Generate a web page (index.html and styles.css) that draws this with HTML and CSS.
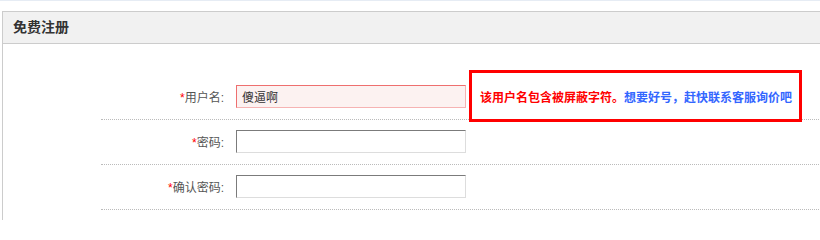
FILE: index.html
```html
<!DOCTYPE html>
<html lang="zh-CN">
<head>
<meta charset="utf-8">
<title>免费注册</title>
<link rel="stylesheet" href="styles.css">
</head>
<body>
<div class="topbar"></div>
<div class="panel">
  <div class="panel-head">免费注册</div>
  <div class="panel-body">
    <div class="form">
      <div class="row">
        <label class="label"><span class="star">*</span>用户名:</label>
        <input class="field field-error" type="text" value="傻逼啊">
      </div>
      <div class="row">
        <label class="label"><span class="star">*</span>密码:</label>
        <input class="field" type="password">
      </div>
      <div class="row">
        <label class="label"><span class="star">*</span>确认密码:</label>
        <input class="field" type="password">
      </div>
    </div>
  </div>
</div>
<div class="tip"><span class="tip-red">该用户名包含被屏蔽字符。</span><span class="tip-blue">想要好号，赶快联系客服询价吧</span></div>
</body>
</html>
```
FILE: styles.css
```css
html, body {
  margin: 0;
  padding: 0;
  background: #fff;
  overflow: hidden;
  height: 220px;
  font-family: "Liberation Sans", "Noto Sans CJK SC", sans-serif;
  font-size: 12px;
  color: #555;
}
.topbar {
  height: 1px;
  background: #e6ecf4;
  margin-bottom: 10px;
}
.panel {
  margin-left: 2px;
  width: 840px;
  height: 208px;
  border-top: 1px solid #cccccc;
  border-left: 1px solid #cccccc;
  overflow: hidden;
}
.panel-head {
  height: 31px;
  line-height: 31px;
  background: #f1f1f1;
  border-bottom: 1px solid #cccccc;
  padding-left: 10px;
  font-size: 14px;
  font-weight: bold;
  color: #333;
}
.panel-body {
  padding-top: 31px;
}
.form {
  margin-left: 98px;
}
.row {
  display: flex;
  align-items: center;
  padding: 10px 0 11px;
  border-bottom: 1px dotted #bbbbbb;
}
.label {
  width: 123px;
  text-align: right;
  margin-right: 12px;
  color: #555;
  font-size: 12px;
}
.star {
  color: #f00;
}
.field {
  box-sizing: border-box;
  width: 230px;
  height: 23px;
  margin: 0;
  padding: 0 5px;
  border: 1px solid;
  border-color: #7b7b7b #dddddd #dddddd #7b7b7b;
  background: #fff;
  font-family: "Liberation Sans", "Noto Sans CJK SC", sans-serif;
  font-size: 12px;
  color: #333;
  outline: none;
}
.field-error {
  border-color: #ee6f6f #f6b3b3 #f6b3b3 #ee6f6f;
  background: #fcf2f1;
}
.tip {
  position: absolute;
  left: 469px;
  top: 70px;
  width: 333px;
  height: 52px;
  box-sizing: border-box;
  border: 3px solid #f00;
  display: flex;
  align-items: center;
  padding-left: 8px;
  font-weight: bold;
  font-size: 12px;
}
.tip-red {
  color: #f00;
}
.tip-blue {
  color: #3366ff;
}
```
